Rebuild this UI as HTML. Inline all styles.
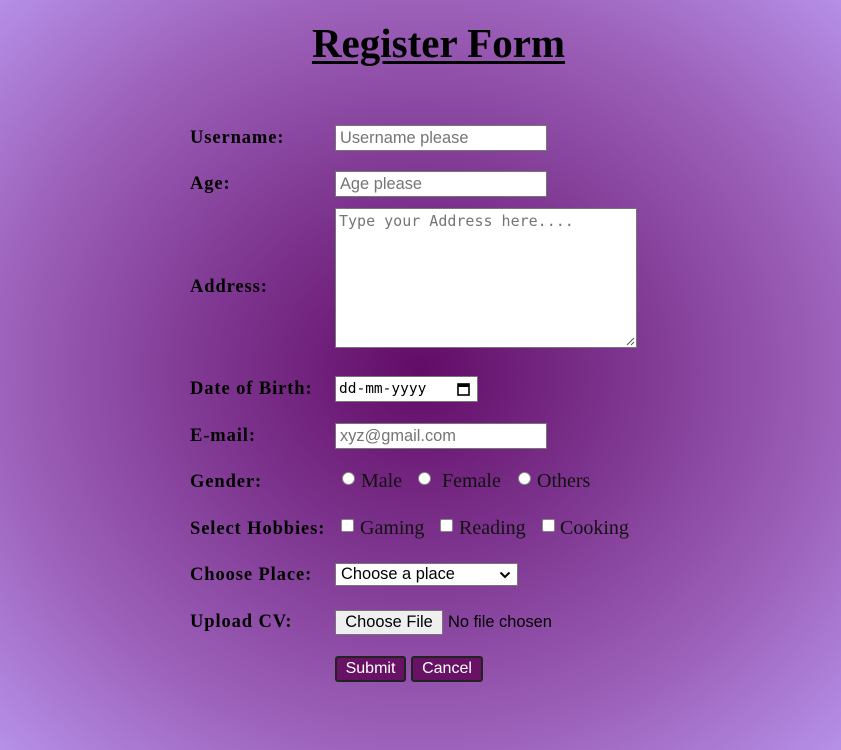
<!DOCTYPE html>
<html><head><style>
html,body{margin:0;padding:0}
body{width:841px;height:750px;position:relative;overflow:hidden;background:radial-gradient(ellipse farthest-corner at 420px 372px,#620c66 0%,#7e3690 35%,#9d62bb 70%,#b690e8 100%);font-family:"Liberation Serif",serif}
.a{position:absolute}
h1{position:absolute;left:0;width:877px;top:19px;margin:0;text-align:center;font-size:41px;font-weight:bold;text-decoration:underline;text-decoration-thickness:3px;text-underline-offset:4px;color:#000}
.l{position:absolute;left:190px;font-weight:bold;font-size:18.5px;letter-spacing:0.9px;color:#000;line-height:20px;margin-top:1px}
.in{position:absolute;left:335px;background:#fff;border:1px solid #767676;box-sizing:border-box;font-family:"Liberation Sans",sans-serif;font-size:16.4px;color:#757575;padding-left:4px;line-height:24px}
.t{position:absolute;font-size:20px;color:#111;line-height:20px;margin-top:-1px}
.r{position:absolute;width:13px;height:13px;border-radius:50%;background:#fff;border:1px solid #888;box-sizing:border-box}
.c{position:absolute;width:13px;height:13px;border-radius:2px;background:#fff;border:1px solid #888;box-sizing:border-box}
.b{position:absolute;top:656px;height:26px;background:#681266;border:2px solid #222;border-radius:3px;box-sizing:border-box;color:#fff;font-family:"Liberation Sans",sans-serif;font-size:16px;text-align:center;line-height:21px}
</style></head><body>
<h1>Register Form</h1>
<div class="l" style="top:127px">Username:</div>
<div class="in" style="top:125px;width:212px;height:26px">Username please</div>
<div class="l" style="top:173px">Age:</div>
<div class="in" style="top:171px;width:212px;height:26px">Age please</div>
<div class="l" style="top:276px">Address:</div>
<div class="in" style="top:208px;width:302px;height:140px;font-family:'DejaVu Sans Mono','Liberation Mono',monospace;font-size:15px;line-height:24px;padding-left:3px">Type your Address here....
<svg class="a" style="right:1px;bottom:1px" width="10" height="10"><path d="M9 2L2 9M9 6L6 9" stroke="#555" stroke-width="1"/></svg></div>
<div class="l" style="top:378px">Date of Birth:</div>
<div class="in" style="top:376px;width:143px;height:26px;color:#000;font-family:'DejaVu Sans Mono',monospace;font-size:14.5px;padding-left:3px">dd-mm-yyyy
<svg class="a" style="left:121px;top:5px" width="13" height="14"><rect x="1" y="2" width="11" height="11" fill="none" stroke="#000" stroke-width="1.6"/><rect x="1" y="2" width="11" height="3" fill="#000"/></svg></div>
<div class="l" style="top:425px">E-mail:</div>
<div class="in" style="top:423px;width:212px;height:26px">xyz@gmail.com</div>
<div class="l" style="top:471px">Gender:</div>
<div class="r" style="left:342px;top:472px"></div><div class="t" style="left:361px;top:472px">Male</div>
<div class="r" style="left:418px;top:472px"></div><div class="t" style="left:442px;top:472px">Female</div>
<div class="r" style="left:518px;top:472px"></div><div class="t" style="left:537px;top:472px">Others</div>
<div class="l" style="top:518px">Select Hobbies:</div>
<div class="c" style="left:341px;top:519px"></div><div class="t" style="left:360px;top:519px">Gaming</div>
<div class="c" style="left:440px;top:519px"></div><div class="t" style="left:459px;top:519px">Reading</div>
<div class="c" style="left:542px;top:519px"></div><div class="t" style="left:560px;top:519px">Cooking</div>
<div class="l" style="top:564px">Choose Place:</div>
<div class="in" style="top:563px;width:183px;height:23px;color:#000;line-height:21px;padding-left:5px">Choose a place
<svg class="a" style="left:163px;top:7px" width="12" height="8"><path d="M1.5 1.5L6 6L10.5 1.5" fill="none" stroke="#000" stroke-width="2"/></svg></div>
<div class="l" style="top:611px">Upload CV:</div>
<div class="in" style="top:610px;width:108px;height:25px;background:#efefef;color:#000;text-align:center;padding:0;line-height:23px">Choose File</div>
<div class="a" style="left:448px;top:613px;font-family:'Liberation Sans',sans-serif;font-size:16.4px;color:#000">No file chosen</div>
<div class="b" style="left:335px;width:71px">Submit</div>
<div class="b" style="left:411px;width:72px">Cancel</div>
</body></html>
